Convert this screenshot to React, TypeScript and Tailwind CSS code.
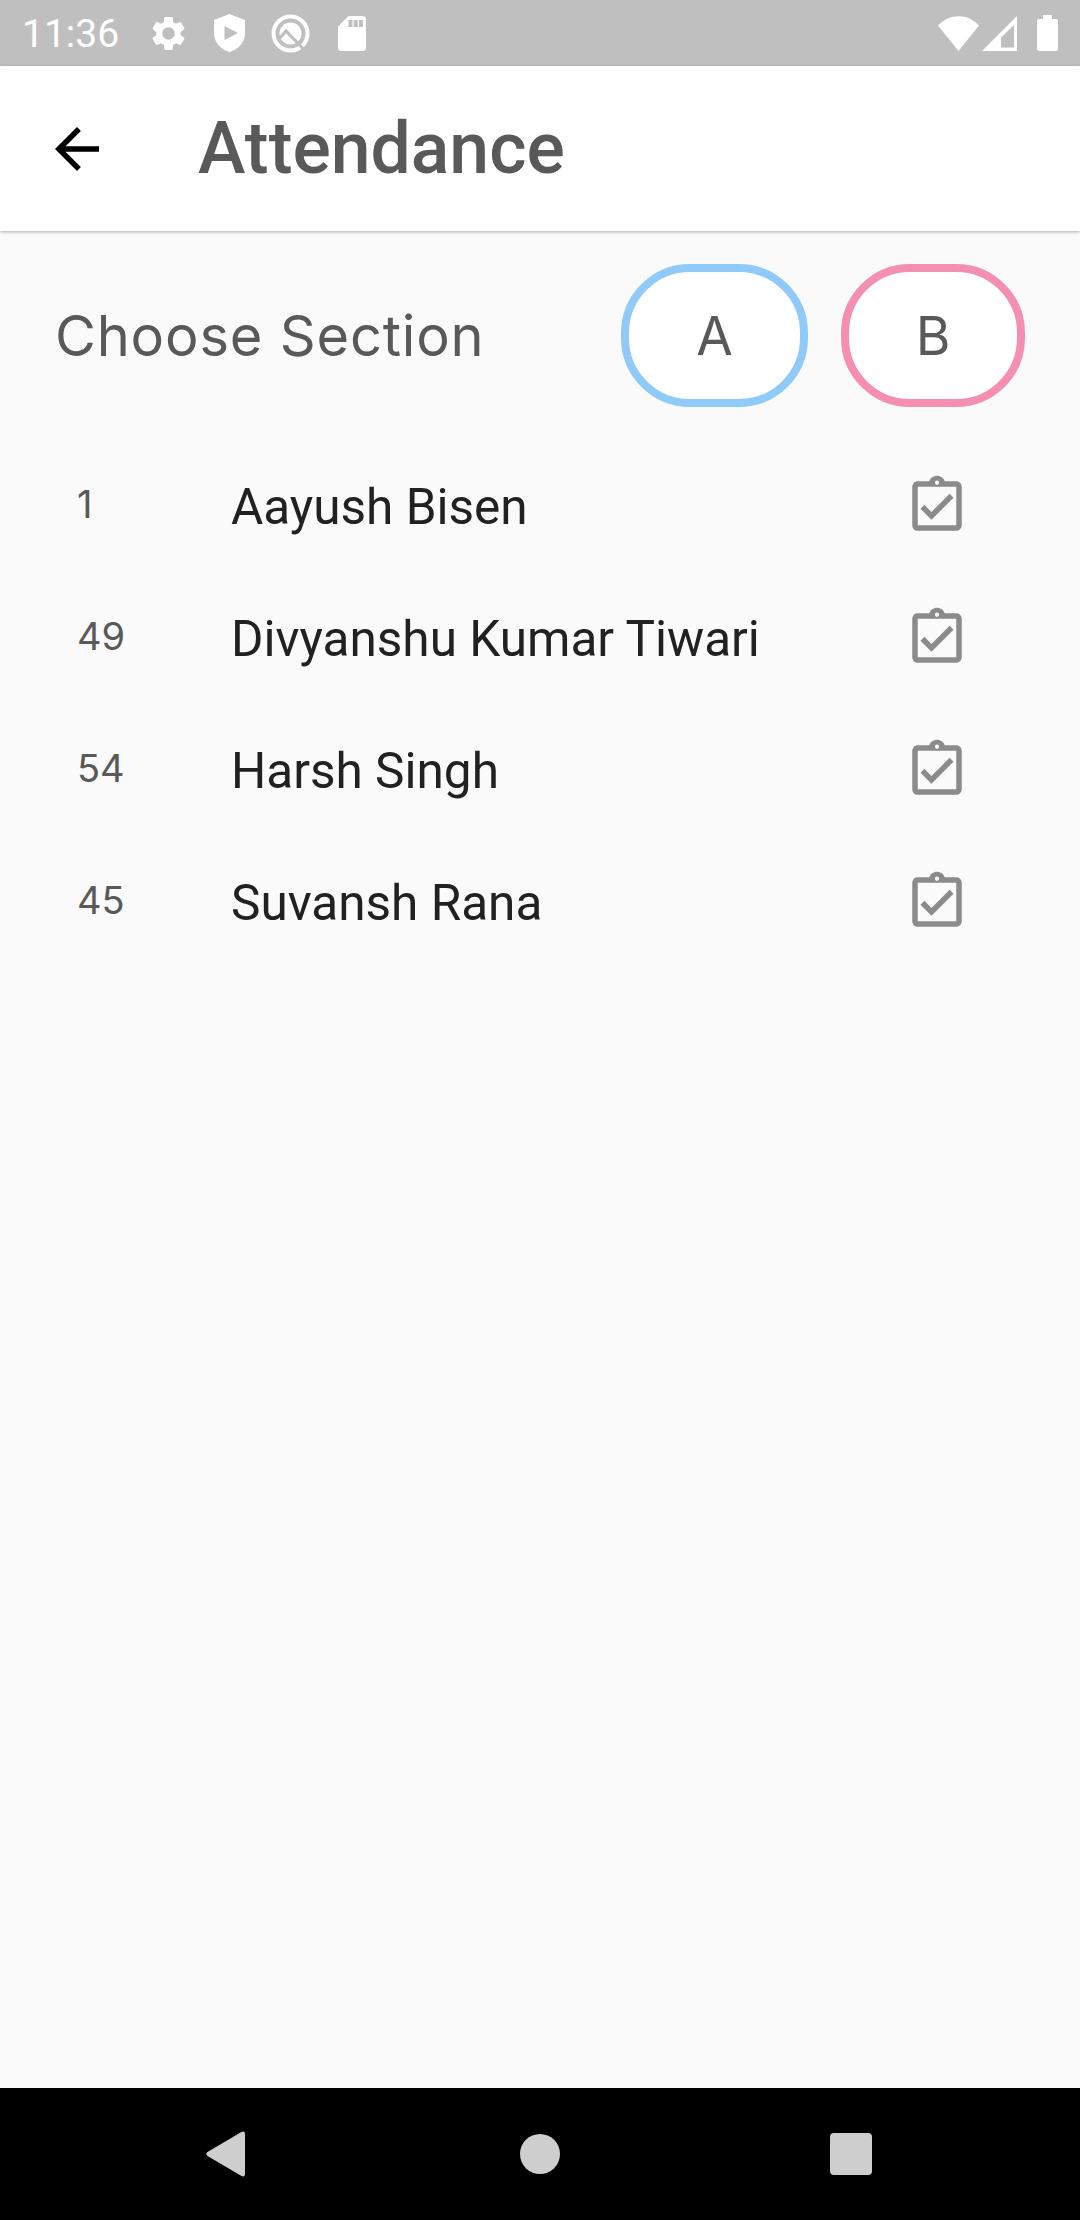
import React from "react";
import { MdArrowBack, MdOutlineAssignmentTurnedIn, MdSettings } from "react-icons/md";

const students = [
  { roll: "1", name: "Aayush Bisen" },
  { roll: "49", name: "Divyanshu Kumar Tiwari" },
  { roll: "54", name: "Harsh Singh" },
  { roll: "45", name: "Suvansh Rana" },
];

function StatusBar() {
  return (
    <div className="flex h-[66px] shrink-0 items-center bg-[#bfbfbf] pl-[22px] text-white">
      <span className="w-[126px] pt-[3px] text-[39px] leading-[63px]">11:36</span>
      <MdSettings className="size-[41px]" />
      <svg className="ml-[25px] h-[38px] w-[31px]" viewBox="0 0 31 38" fill="currentColor">
        <path fillRule="evenodd" d="M15.500 0 31 6v13c0 9-6.500 16.500-15.500 19C6.500 35.500 0 28 0 19V6zM10.500 12v14L24 19z" />
      </svg>
      <svg className="ml-[26px] size-[39px]" viewBox="0 0 39 39">
        <circle cx="19.500" cy="19.500" r="17" fill="none" stroke="currentColor" strokeWidth="4" />
        <circle cx="19.500" cy="19.500" r="11" fill="currentColor" />
        <path d="M7.500 25.500 15 17.200 33.500 36" fill="none" stroke="#bfbfbf" strokeWidth="3.200" />
      </svg>
      <svg className="ml-[28px] h-[35px] w-[28px]" viewBox="0 0 28 35" fill="currentColor">
        <path fillRule="evenodd" d="M10.500 0H24.500Q28 0 28 3.500V31.500Q28 35 24.500 35H3.500Q0 35 0 31.500V10.500zM10.500 4v7h4V4zM15.700 4v7h4V4zM20.900 4v7h4V4z" />
      </svg>
      <div className="ml-auto flex items-center pr-[22px]">
        <svg className="h-[35px] w-[41px]" viewBox="0 0 41 35" fill="currentColor">
          <path d="M20.500 35 0 9.500C11-3 30-3 41 9.500z" />
        </svg>
        <svg className="ml-[3px] size-[35px]" viewBox="0 0 35 35" fill="currentColor">
          <path fillRule="evenodd" d="M35 0V35H0zM32 9 19 21.500V31.500H32z" />
        </svg>
        <svg className="ml-[20px] h-[36px] w-[21px]" viewBox="0 0 21 36" fill="currentColor">
          <path d="M6 0h9v4h4q2 0 2 2v28q0 2-2 2H2q-2 0-2-2V6q0-2 2-2h4z" />
        </svg>
      </div>
    </div>
  );
}

function AppBar() {
  return (
    <header className="z-10 flex h-[165px] shrink-0 items-center bg-white pl-[44px] shadow-[0_1px_3px_rgba(0,0,0,0.3)]">
      <MdArrowBack className="size-[66px] text-black" />
      <h1 className="ml-[88px] text-[71.5px] leading-[84px] font-medium text-[#595959]">Attendance</h1>
    </header>
  );
}

function SectionPicker() {
  return (
    <div className="flex h-[143px] items-center pr-[55px] pl-[55px] font-['Inter',sans-serif] text-[#595959]">
      <span className="text-[56px] tracking-[0.8px]">Choose Section</span>
      <button className="ml-auto h-[143px] w-[187px] rounded-[69px] border-8 border-[#90caf9] bg-white pt-[2px] text-[53px]">A</button>
      <button className="ml-[33px] h-[143px] w-[184px] rounded-[69px] border-8 border-[#f48fb1] bg-white pt-[2px] text-[53px]">B</button>
    </div>
  );
}

function StudentRow({ roll, name }: { roll: string; name: string }) {
  return (
    <li className="flex h-[132px] items-center pr-[110px] pl-[77px]">
      <span className="w-[154px] pb-[4px] font-['Inter',sans-serif] text-[38px] leading-[58px] text-[#595959]">{roll}</span>
      <span className="pt-[2px] text-[49.5px] leading-[58px] text-[#212121]">{name}</span>
      <MdOutlineAssignmentTurnedIn className="ml-auto size-[66px] text-[#8b8b8b]" />
    </li>
  );
}

function NavigationBar() {
  return (
    <nav className="flex h-[132px] shrink-0 items-center bg-black pl-[205px] text-[#cecece]">
      <svg className="h-[46px] w-[40px]" viewBox="0 0 40 46" fill="currentColor">
        <path d="M36 1.200Q40-1 40 3.500V42.500Q40 47 36 44.800L2.500 25Q0 23 2.500 21z" />
      </svg>
      <div className="ml-[275px] size-10 rounded-full bg-[#cecece]" />
      <div className="ml-[270px] size-[42px] rounded-[4px] bg-[#cecece]" />
    </nav>
  );
}

export default function App() {
  return (
    <div className="flex h-[2220px] w-[1080px] flex-col overflow-hidden bg-[#fafafa] font-['Roboto',sans-serif]">
      <StatusBar />
      <AppBar />
      <main className="flex-1 pt-[33px]">
        <SectionPicker />
        <ul className="mt-[33px]">
          {students.map((s) => (
            <StudentRow key={s.roll} roll={s.roll} name={s.name} />
          ))}
        </ul>
      </main>
      <NavigationBar />
    </div>
  );
}
